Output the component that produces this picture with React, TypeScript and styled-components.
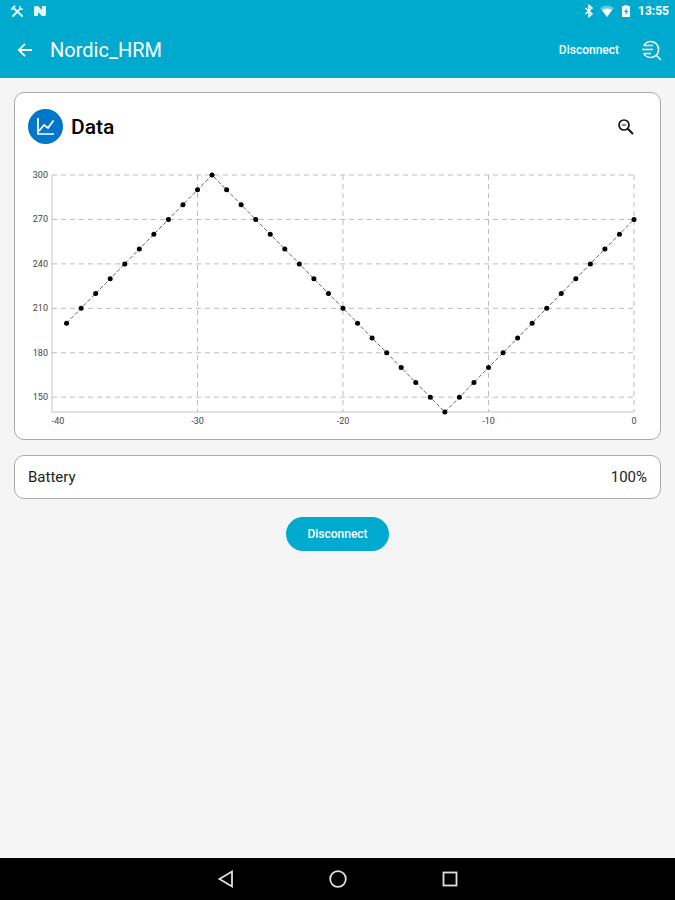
import React from "react";
import styled, { createGlobalStyle } from "styled-components";

const GlobalStyle = createGlobalStyle`
  * { box-sizing: border-box; }
  body {
    margin: 0;
    background: #f5f5f5;
    font-family: Roboto, "Noto Sans", sans-serif;
  }
`;

const Screen = styled.div`
  display: flex;
  flex-direction: column;
  min-height: 100vh;
`;

const TopArea = styled.header`
  background: #00a9ce;
  color: #fff;
`;

const StatusBar = styled.div`
  display: flex;
  align-items: center;
  justify-content: space-between;
  height: 22px;
  padding: 0 6px 0 9px;
  font-size: 12px;
  font-weight: 700;
  line-height: 22px;
`;

const StatusGroup = styled.div`
  display: flex;
  align-items: center;
  gap: 8px;
`;

const StatusIcons = styled(StatusGroup)`
  gap: 6px;
`;

const AppBar = styled.div`
  display: flex;
  align-items: center;
  height: 56px;
  padding: 0 12px 0 14px;
`;

const Title = styled.h1`
  flex: 1;
  margin: 0 0 0 14px;
  font-size: 20px;
  font-weight: 400;
  line-height: 24px;
`;

const BarButton = styled.button`
  display: flex;
  align-items: center;
  padding: 0;
  border: 0;
  background: none;
  color: inherit;
  font: 500 12px/16px Roboto, sans-serif;
  cursor: pointer;
`;

const BarActions = styled.div`
  display: flex;
  align-items: center;
  gap: 20px;
`;

const Content = styled.main`
  display: flex;
  flex: 1;
  flex-direction: column;
  align-items: center;
  gap: 15px;
  padding: 14px 14px 15px;
`;

const Card = styled.section`
  width: 100%;
  border: 1px solid #aaa;
  border-radius: 10px;
  background: #fff;
`;

const ChartCard = styled(Card)`
  padding: 16px 13px;
`;

const CardHeader = styled.div`
  display: flex;
  align-items: center;
  padding-right: 11px;
`;

const CardTitle = styled.h2`
  flex: 1;
  margin: 0 0 0 8px;
  color: #000;
  font-size: 21px;
  font-weight: 500;
  line-height: 24px;
`;

const ZoomButton = styled(BarButton)`
  color: #000;
`;

const ChartSvg = styled.svg`
  display: block;
  width: 100%;
  height: auto;
  margin-top: 20px;
  overflow: visible;

  text {
    fill: #444;
    font-family: Roboto, sans-serif;
    font-size: 9px;
  }
`;

const BatteryCard = styled(Card)`
  display: flex;
  align-items: center;
  justify-content: space-between;
  min-height: 44px;
  padding: 0 13px;
  color: #222;
  font-size: 15px;
  line-height: 20px;
`;

const PrimaryButton = styled.button`
  height: 34px;
  margin-top: 3px;
  padding: 0 21px;
  border: 0;
  border-radius: 17px;
  background: #00a9ce;
  color: #fff;
  font: 500 12px/16px Roboto, sans-serif;
  cursor: pointer;
`;

const NavBar = styled.nav`
  display: flex;
  align-items: center;
  justify-content: center;
  gap: 92px;
  height: 42px;
  background: #000;
`;

const NavButton = styled.button`
  display: flex;
  padding: 0;
  border: 0;
  background: none;
  color: #e0e0e0;
  cursor: pointer;
`;

const LEFT = 24;
const RIGHT = 606;
const TOP = 11;
const BOTTOM = 248;

const xAt = (v: number) => LEFT + ((v + 40) / 40) * (RIGHT - LEFT);
const yAt = (v: number) => BOTTOM - ((v - 140) / 160) * (BOTTOM - TOP);

const samples = Array.from({ length: 40 }, (_, i) => {
  const t = i - 39;
  const value = t <= -29 ? 590 + t * 10 : t <= -13 ? 10 - t * 10 : 270 + t * 10;
  return { t, value };
});

function Chart() {
  return (
    <ChartSvg viewBox="0 0 619 259" role="img" aria-label="Data chart">
      <g stroke="#bdbdbd" strokeWidth="1" strokeDasharray="5 4">
        {[150, 180, 210, 240, 270, 300].map((v) => (
          <line key={v} x1={LEFT} x2={RIGHT} y1={yAt(v)} y2={yAt(v)} />
        ))}
        {[-30, -20, -10, 0].map((v) => (
          <line key={v} x1={xAt(v)} x2={xAt(v)} y1={TOP} y2={BOTTOM} />
        ))}
      </g>
      <path d={`M${LEFT} ${TOP}V${BOTTOM}H${RIGHT}`} fill="none" stroke="#c4c4c4" />
      {[150, 180, 210, 240, 270, 300].map((v) => (
        <text key={v} x="20" y={yAt(v) + 3} textAnchor="end">{v}</text>
      ))}
      {[-40, -30, -20, -10, 0].map((v) => (
        <text key={v} x={v === -40 ? xAt(v) + 6 : xAt(v)} y="260" textAnchor="middle">{v}</text>
      ))}
      <polyline
        points={samples.map((s) => `${xAt(s.t)},${yAt(s.value)}`).join(" ")}
        fill="none"
        stroke="#666"
        strokeWidth="1"
        strokeDasharray="4 2"
      />
      {samples.map((s) => (
        <circle key={s.t} cx={xAt(s.t)} cy={yAt(s.value)} r="2.5" fill="#000" />
      ))}
    </ChartSvg>
  );
}

export default function App() {
  return (
    <Screen>
      <GlobalStyle />
      <TopArea>
        <StatusBar>
          <StatusGroup>
            <svg width="16" height="16" viewBox="0 0 16 16" fill="none" stroke="#e4f6fa" strokeLinecap="round">
              <path d="M4.5 5L13 13" strokeWidth="2" />
              <path d="M11.500 5.500L4 13" strokeWidth="2" />
              <path d="M3 6l2.500-2.500" strokeWidth="2.200" />
              <path d="M10.800 3.500v2.700h2.700" strokeWidth="1.500" />
            </svg>
            <svg width="14" height="12" viewBox="0 0 14 12" fill="#e4f6fa">
              <path d="M1 11V2.500Q1 1 2.500 1H5L9 5V1H13V9.500Q13 11 11.500 11H9L5 7V11Z" />
            </svg>
          </StatusGroup>
          <StatusIcons>
            <svg width="10" height="14" viewBox="0 0 10 14" fill="none" stroke="#fff" strokeWidth="1.500">
              <path d="M1.500 4L8 10L5 12.500V1.500L8 4L1.500 10" />
            </svg>
            <svg width="14" height="12" viewBox="0 0 14 12" fill="#fff">
              <path d="M0 3Q7-2 14 3L7 12Z" opacity=".4" />
              <path d="M2 5Q7 2 12 5L7 12Z" />
            </svg>
            <svg width="12" height="14" viewBox="0 0 12 14">
              <path d="M2 2h2.500V1h3v1H10v11H2Z" fill="#fff" />
              <path d="M6.800 4L4 8h1.700v3L8.200 7H6.500Z" fill="#00a9ce" />
            </svg>
            <span>13:55</span>
          </StatusIcons>
        </StatusBar>
        <AppBar>
          <BarButton aria-label="Back">
            <svg width="22" height="22" viewBox="0 0 22 22" fill="none" stroke="#fff" strokeWidth="1.800">
              <path d="M18 11H5.500M11 4.800L4.800 11L11 17.200" />
            </svg>
          </BarButton>
          <Title>Nordic_HRM</Title>
          <BarActions>
            <BarButton>Disconnect</BarButton>
            <BarButton aria-label="Show log">
              <svg width="24" height="24" viewBox="0 0 24 24" fill="none" stroke="#fff" strokeWidth="1.400">
                <path d="M4.700 7.500A8 8 0 1 1 4.700 15.500" />
                <path d="M4.700 7.500H14M3 11.500H14M4.700 15.500H12M17.200 17.200L22 22" />
              </svg>
            </BarButton>
          </BarActions>
        </AppBar>
      </TopArea>
      <Content>
        <ChartCard>
          <CardHeader>
            <svg width="35" height="35" viewBox="0 0 35 35" fill="none">
              <circle cx="17.500" cy="17.500" r="17.500" fill="#0077c8" />
              <path d="M10 9V25H26" stroke="#fff" strokeWidth="1.700" />
              <path d="M11 22L16 16L20 19L25.500 11.500" stroke="#fff" strokeWidth="1.700" />
            </svg>
            <CardTitle>Data</CardTitle>
            <ZoomButton aria-label="Zoom out">
              <svg width="20" height="20" viewBox="0 0 20 20" fill="none" stroke="#111">
                <circle cx="8" cy="8" r="5" strokeWidth="1.700" />
                <path d="M5.800 8H10.200" strokeWidth="1" />
                <path d="M11.800 11.800L17 17" strokeWidth="2" />
              </svg>
            </ZoomButton>
          </CardHeader>
          <Chart />
        </ChartCard>
        <BatteryCard>
          <span>Battery</span>
          <span>100%</span>
        </BatteryCard>
        <PrimaryButton>Disconnect</PrimaryButton>
      </Content>
      <NavBar aria-label="System navigation">
        <NavButton aria-label="Back">
          <svg width="20" height="20" viewBox="0 0 20 20" fill="none" stroke="currentColor" strokeWidth="1.800">
            <path d="M16 2.500V17.500L3.500 10Z" />
          </svg>
        </NavButton>
        <NavButton aria-label="Home">
          <svg width="20" height="20" viewBox="0 0 20 20" fill="none" stroke="currentColor" strokeWidth="1.800">
            <circle cx="10" cy="10" r="7.800" />
          </svg>
        </NavButton>
        <NavButton aria-label="Recent apps">
          <svg width="20" height="20" viewBox="0 0 20 20" fill="none" stroke="currentColor" strokeWidth="1.800">
            <rect x="3.500" y="3.500" width="13" height="13" />
          </svg>
        </NavButton>
      </NavBar>
    </Screen>
  );
}
